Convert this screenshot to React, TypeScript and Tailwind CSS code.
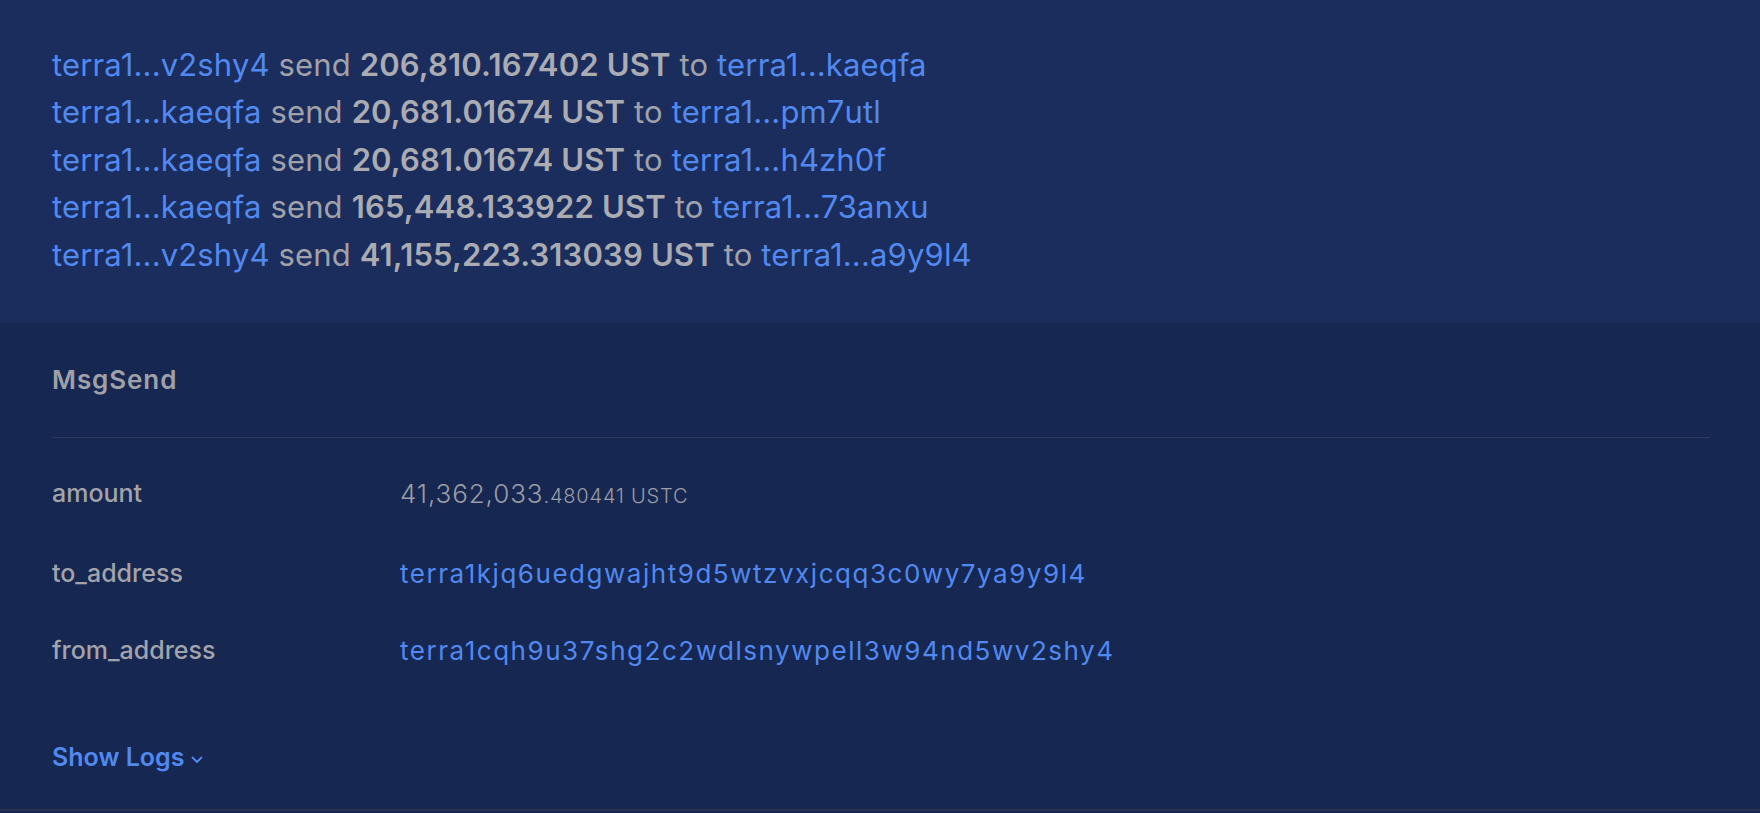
import React from "react";

const lines = [
  { from: "terra1...v2shy4", amount: "206,810.167402 UST", to: "terra1...kaeqfa" },
  { from: "terra1...kaeqfa", amount: "20,681.01674 UST", to: "terra1...pm7utl" },
  { from: "terra1...kaeqfa", amount: "20,681.01674 UST", to: "terra1...h4zh0f" },
  { from: "terra1...kaeqfa", amount: "165,448.133922 UST", to: "terra1...73anxu" },
  { from: "terra1...v2shy4", amount: "41,155,223.313039 UST", to: "terra1...a9y9l4" },
];

export default function App() {
  return (
    <div className="w-full h-[813px] bg-[#162751] font-['Inter',sans-serif] flex flex-col">
      <div className="bg-[#1b2d5c] h-[323px] px-[52px] pt-[41px] shrink-0">
        {lines.map((l, i) => (
          <div key={i} className="text-[31px] leading-[47.4px] text-[#a1a2a9] whitespace-nowrap tracking-[0.005em]">
            <span className="text-[#5289f0]">{l.from}</span> send{" "}
            <span className="font-semibold text-[#abacb2]">{l.amount}</span> to{" "}
            <span className="text-[#5289f0]">{l.to}</span>
          </div>
        ))}
      </div>
      <div className="flex-1 flex flex-col px-[52px] pr-[50px]">
        <div className="pt-[38px] text-[26px] leading-[37.5px] font-semibold tracking-[0.035em] text-[#a0a1a8]">MsgSend</div>
        <div className="mt-[38px] h-px bg-[#2e3a59]" />
        <div className="mt-[37px] flex flex-col gap-y-[39.5px] text-[25px] leading-[37.5px]">
          <div className="flex">
            <div className="w-[348px] shrink-0 font-medium text-[#a3a4ab]">amount</div>
            <div className="text-[#9c9da5] font-light text-[26px] tracking-[0.035em]">
              41,362,033<span className="text-[20px] tracking-[0.04em]">.480441 USTC</span>
            </div>
          </div>
          <div className="flex">
            <div className="w-[348px] shrink-0 font-medium text-[#a3a4ab]">to_address</div>
            <div className="text-[#5289f0] text-[26px] tracking-[0.059em]">terra1kjq6uedgwajht9d5wtzvxjcqq3c0wy7ya9y9l4</div>
          </div>
          <div className="flex">
            <div className="w-[348px] shrink-0 font-medium text-[#a3a4ab]">from_address</div>
            <div className="text-[#5289f0] text-[26px] tracking-[0.059em]">terra1cqh9u37shg2c2wdlsnywpell3w94nd5wv2shy4</div>
          </div>
        </div>
        <div className="mt-[70px] flex items-center gap-[7px] text-[25px] leading-[37.5px] font-semibold text-[#5289f0]">
          <span>Show Logs</span>
          <svg width="12" height="8" viewBox="0 0 12 8" fill="none" className="mt-[4px]">
            <path d="M1.5 1.5 L6 6 L10.5 1.5" stroke="#5289f0" strokeWidth="1.8" strokeLinecap="round" strokeLinejoin="round" />
          </svg>
        </div>
        <div className="flex-1" />
      </div>
      <div className="h-[2px] bg-[#2c3352] shrink-0" />
      <div className="h-[2px] bg-[#162751] shrink-0" />
    </div>
  );
}
